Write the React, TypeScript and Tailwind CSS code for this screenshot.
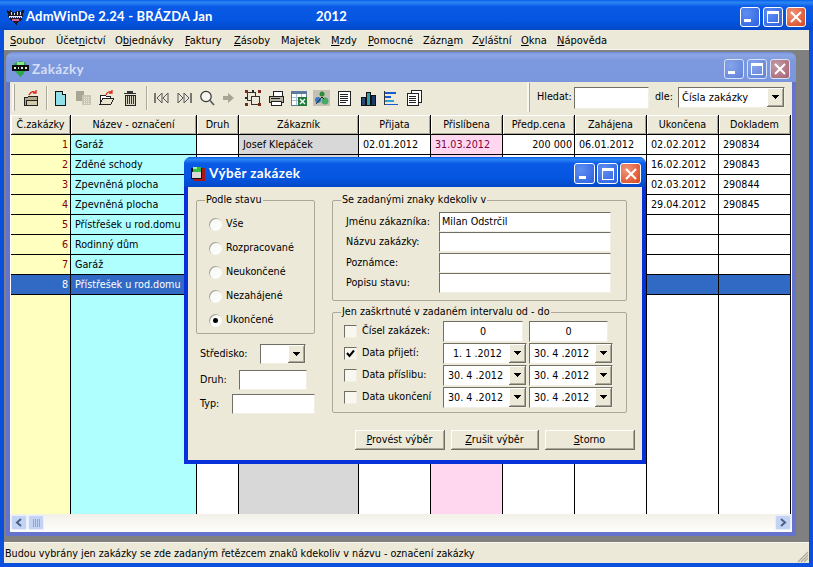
import React from "react";

const sunken = "border border-t-[#716f64] border-l-[#716f64] border-r-[#f1efe2] border-b-[#f1efe2] bg-white";
const raised = "bg-[#ece9d8] shadow-[inset_1px_1px_0_#fff,inset_-1px_-1px_0_#aca899]";
const titleFont = "[font-family:'Lato',sans-serif] font-bold text-[13.5px] tracking-[0.35px] whitespace-nowrap";
const mainTitleFont = "[font-family:'Lato',sans-serif] font-bold text-[13px] tracking-[0.2px] whitespace-nowrap";

function WinBtn({ kind, size, faded }: { kind: "min" | "max" | "close"; size: "w-[20px] h-[20px]" | "w-[21px] h-[21px]"; faded?: boolean }) {
  const bg =
    kind === "close"
      ? faded
        ? "bg-[radial-gradient(circle_at_30%_30%,#c49aa8,#a8606c)]"
        : "bg-[radial-gradient(circle_at_30%_30%,#f0957a,#d8431c)]"
      : faded
      ? "bg-[radial-gradient(circle_at_30%_30%,#86a4ec,#5f82d8)]"
      : "bg-[radial-gradient(circle_at_30%_30%,#5f8ff2,#2b5fe0)]";
  const border = faded ? "border-[#d8e2f8]" : "border-white";
  return (
    <div className={`${size} ${bg} ${border} border rounded-[3px] flex items-center justify-center shrink-0`}>
      <svg width="16" height="16" viewBox="0 0 16 16" fill="none" shapeRendering="crispEdges">
        {kind === "min" && <rect x="2" y="10" width="7" height="3" fill="#fff" />}
        {kind === "max" && (
          <path d="M2 2h12v12H2z M3 5v8h10V5z" fill="#fff" fillRule="evenodd" />
        )}
        {kind === "close" && (
          <path d="M3 3l10 10M13 3L3 13" stroke="#fff" strokeWidth="2" shapeRendering="auto" />
        )}
      </svg>
    </div>
  );
}

function Caret() {
  return (
    <svg width="7" height="4" viewBox="0 0 7 4" shapeRendering="crispEdges">
      <path d="M0 0h7v1H6v1H5v1H4v1H3V3H2V2H1V1H0z" fill="#000" />
    </svg>
  );
}

function DropBtn() {
  return (
    <div className={`${raised} w-[17px] self-stretch flex items-center justify-center shrink-0 border-r border-b border-[#716f64]`}>
      <Caret />
    </div>
  );
}

const Svg = ({ children }: { children: React.ReactNode }) => (
  <svg width="16" height="16" viewBox="0 0 16 16" fill="none" shapeRendering="crispEdges" className="shrink-0">
    {children}
  </svg>
);

const IFolderArrow = () => (
  <Svg>
    <path d="M1 7h4l1-1h8v9H1z" fill="#b4a98a" stroke="#222" />
    <path d="M3 15l1-5h11l-1 5z" fill="#d4c9a8" stroke="#222" />
    <path d="M6 5c2-4 5-4 7-2M13 0v3h-3" stroke="#e03020" strokeWidth="1.4" shapeRendering="auto" />
  </Svg>
);
const IPage = () => (
  <Svg>
    <path d="M3 1h7l3 3v11H3z" fill="#8fe0e8" stroke="#111" />
    <path d="M10 1v3h3" stroke="#111" fill="#fff" />
  </Svg>
);
const ICopy = () => (
  <Svg>
    <path d="M0 1h8v10H0z" fill="#a9a594" />
    <path d="M6 5h9v10H6z" fill="#c8c5b4" />
    <path d="M8 7h5M8 9h5M8 11h5M8 13h5" stroke="#ece9d8" strokeDasharray="1 1" />
  </Svg>
);
const IOpen = () => (
  <Svg>
    <path d="M1 5h5l1 1h4v8H1z" fill="#fff" stroke="#222" />
    <path d="M1 14l3-6h11l-3 6z" fill="#e8e4cf" stroke="#222" />
    <path d="M7 5c1-3 4-4 6-3M13 0v3h-3" stroke="#e03020" strokeWidth="1.3" shapeRendering="auto" />
  </Svg>
);
const ITrash = () => (
  <Svg>
    <path d="M5 1h6v2H5zM2 3h12v1H2z" fill="#333" />
    <path d="M3 5h10v10H3z" fill="#d8d5c4" stroke="#222" />
    <path d="M5 6v8M7 6v8M9 6v8M11 6v8" stroke="#333" />
  </Svg>
);
const IFirst = () => (
  <Svg>
    <path d="M1 3h2v10H1z" fill="#777" />
    <path d="M9 3v10L4 8z" fill="#ece9d8" stroke="#555" shapeRendering="auto" />
    <path d="M15 3v10l-5-5z" fill="#ece9d8" stroke="#555" shapeRendering="auto" />
  </Svg>
);
const ILast = () => (
  <Svg>
    <path d="M13 3h2v10h-2z" fill="#777" />
    <path d="M7 3v10l5-5z" fill="#ece9d8" stroke="#555" shapeRendering="auto" />
    <path d="M1 3v10l5-5z" fill="#ece9d8" stroke="#555" shapeRendering="auto" />
  </Svg>
);
const IMag = () => (
  <Svg>
    <circle cx="7" cy="6.5" r="5.2" stroke="#333" strokeWidth="1.2" fill="#f6f5ee" shapeRendering="auto" />
    <path d="M11 10.5l4 4.5" stroke="#555" strokeWidth="1.6" shapeRendering="auto" />
  </Svg>
);
const IArrow = () => (
  <Svg>
    <path d="M3 6h5V3l6 5-6 5v-3H3z" fill="#a8a594" shapeRendering="auto" />
  </Svg>
);
const ISelect = () => (
  <Svg>
    <path d="M2 2h8v8H2z" stroke="#333" />
    <path d="M6 6h8v8H6z" stroke="#333" fill="#ece9d8" />
    <path d="M0 0h3v3H0zM13 0h3v3h-3zM0 13h3v3H0zM13 13h3v3h-3z" fill="#7a2a14" />
    <path d="M7 0h2v2H7zM0 7h2v2H0z" fill="#222" />
  </Svg>
);
const IPrint = () => (
  <Svg>
    <path d="M5 1h9v5H5z" fill="#fff" stroke="#222" />
    <path d="M1 6h14v6H1z" fill="#b8b5a4" stroke="#222" />
    <path d="M3 11h10v4H3z" fill="#fff" stroke="#222" />
    <path d="M3 8h9" stroke="#222" />
  </Svg>
);
const IExcel = () => (
  <Svg>
    <path d="M0 1h15v14H0z" fill="#fff" stroke="#5c7a9e" />
    <path d="M0 1h15v3H0z" fill="#5c7a9e" />
    <path d="M1 7h13M1 10h13M5 4v11M10 4v11" stroke="#a8c0d8" />
    <path d="M7 7h9v9H7z" fill="#1f7a3a" />
    <path d="M9 9l5 5M14 9l-5 5" stroke="#fff" strokeWidth="1.4" shapeRendering="auto" />
  </Svg>
);
const IImage = () => (
  <div className="w-[17px] h-[16px] bg-[#c4c1b2] flex items-center justify-center">
    <Svg>
      <circle cx="8" cy="4" r="2.5" fill="#2e8b3a" shapeRendering="auto" />
      <circle cx="4" cy="10" r="3" fill="#3a78c8" shapeRendering="auto" />
      <circle cx="11" cy="11" r="3.5" fill="#48a868" shapeRendering="auto" />
      <path d="M2 14l6-7 2 2" stroke="#222" shapeRendering="auto" />
    </Svg>
  </div>
);
const ILines = () => (
  <Svg>
    <path d="M2 1h12v14H2z" fill="#fff" stroke="#222" />
    <path d="M4 4h8M4 6h8M4 8h8M4 10h8M4 12h6" stroke="#222" />
  </Svg>
);
const IBars = () => (
  <Svg>
    <path d="M1 7h4v8H1z" fill="#2a4a7a" stroke="#111" />
    <path d="M6 2h4v13H6z" fill="#2ea0a8" stroke="#111" />
    <path d="M11 5h4v10h-4z" fill="#1e3a6a" stroke="#111" />
  </Svg>
);
const IAlign = () => (
  <Svg>
    <path d="M1 1v14" stroke="#333" />
    <path d="M2 2h11v2H2z" fill="#1a5ad0" />
    <path d="M2 6h6v2H2z" fill="#1a5ad0" />
    <path d="M2 10h9v2H2z" fill="#2ea0c8" />
    <path d="M2 14h13v1H2z" fill="#1a5ad0" />
  </Svg>
);
const IDocs = () => (
  <Svg>
    <path d="M5 0h10v12H5z" fill="#fff" stroke="#222" />
    <path d="M1 3h11v12H1z" fill="#fff" stroke="#222" />
    <path d="M3 6h7M3 8h7M3 10h7M3 12h7" stroke="#222" />
  </Svg>
);

const AppIcon = () => (
  <svg width="17" height="17" viewBox="0 0 17 17" className="shrink-0" shapeRendering="crispEdges">
    <path d="M0 1l2 2 1-2 2 2 1-1 1 2 2-2 1 1 2-2 1 2 2-2 2 0-1 6-1 3-2 2-2 1-1 3-2-1-1-2-3-1-2-3-1-3z" fill="#1a1a24" />
    <path d="M4 3h1v3H4zM7 4h1v2H7zM10 3h1v3h-1zM13 3h1v3h-1z" fill="#d8d8e8" />
    <path d="M2 7h13v2H2z" fill="#e8e8f4" />
    <path d="M3 8h1v1H3zM5 8h1v1H5zM7 8h1v1H7zM9 8h1v1H9zM11 8h1v1h-1zM13 8h1v1h-1z" fill="#203080" />
    <path d="M5 10h7v2H5z" fill="#d8609a" />
  </svg>
);
const ChildIcon = () => (
  <svg width="17" height="16" viewBox="0 0 17 16" className="shrink-0" shapeRendering="crispEdges">
    <path d="M8 0l6 2v5l-2 5-4 4-4-4-2-5V2z" fill="#2ea84a" />
    <path d="M5 1h7v3H5z" fill="#8fe08f" />
    <path d="M0 4h17v6H0z" fill="#111" />
    <path d="M2 6h2v2H2zM6 6h1v2H6zM9 6h2v2H9zM13 6h2v2h-2z" fill="#d8f0d8" />
  </svg>
);
const DlgIcon = () => (
  <svg width="16" height="16" viewBox="0 0 16 16" className="shrink-0" shapeRendering="crispEdges">
    <path d="M3 2h12v13H3z" fill="#a81818" />
    <path d="M1 2h11v11H1z" fill="#111" />
    <path d="M2 6h9v6H2z" fill="#d8d8d8" />
    <path d="M3 1h8v5H3z" fill="#30c040" />
    <path d="M3 1h4v2H3z" fill="#a8f0a8" />
  </svg>
);

const menu: [string, string, string, string][] = [
  ["", "S", "oubor", "w-[46px]"],
  ["Účet", "n", "ictví", "w-[59px]"],
  ["O", "b", "jednávky", "w-[70px]"],
  ["", "F", "aktury", "w-[49px]"],
  ["", "Z", "ásoby", "w-[47px]"],
  ["Ma", "j", "etek", "w-[50px]"],
  ["", "M", "zdy", "w-[37px]"],
  ["", "P", "omocné", "w-[55px]"],
  ["Zázn", "a", "m", "w-[49px]"],
  ["Z", "v", "láštní", "w-[49px]"],
  ["", "O", "kna", "w-[36px]"],
  ["", "N", "ápověda", "w-[60px]"],
];

const headers = ["Č.zakázky", "Název - označení", "Druh", "Zákazník", "Přijata", "Přislíbena", "Předp.cena", "Zahájena", "Ukončena", "Dokladem"];
const cols = "grid grid-cols-[60px_126px_42px_120px_72px_72px_72px_72px_72px_72px]";
const colBg = ["bg-[#ffffc0]", "bg-[#b0ffff]", "bg-white", "bg-[#d8d8d8]", "bg-white", "bg-[#ffd8f0]", "bg-white", "bg-white", "bg-white", "bg-white"];

const rows: { name: string; end: string; doc: string; cells?: Record<number, string> }[] = [
  { name: "Garáž", end: "02.02.2012", doc: "290834", cells: { 3: "Josef Klepáček", 4: "02.01.2012", 5: "31.03.2012", 6: "200 000", 7: "06.01.2012" } },
  { name: "Zděné schody", end: "16.02.2012", doc: "290843" },
  { name: "Zpevněná plocha", end: "02.03.2012", doc: "290844" },
  { name: "Zpevněná plocha", end: "29.04.2012", doc: "290845" },
  { name: "Přístřešek u rod.domu", end: "", doc: "" },
  { name: "Rodinný dům", end: "", doc: "" },
  { name: "Garáž", end: "", doc: "" },
  { name: "Přístřešek u rod.domu", end: "", doc: "" },
];

function Row({ r, i }: { r: (typeof rows)[number]; i: number }) {
  const sel = i === 7;
  const values = [String(i + 1), r.name, "", "", "", "", "", "", r.end, r.doc].map((v, c) => r.cells?.[c] ?? v);
  return (
    <div className={cols}>
      {values.map((v, c) => (
        <div
          key={c}
          className={`h-[20px] leading-[19px] border-r border-b border-black pl-[4px] pr-[2px] whitespace-nowrap overflow-hidden ${
            sel ? "bg-[#316ac5] text-white" : colBg[c]
          } ${c === 0 || c === 6 ? "text-right" : ""} ${c === 0 && !sel ? "text-[#800000]" : ""} ${c === 5 ? "text-[#800040]" : ""}`}
        >
          {v}
        </div>
      ))}
    </div>
  );
}

function Radio({ label, on }: { label: string; on?: boolean }) {
  return (
    <div className="h-[24px] flex items-center pl-[12px]">
      <div className="w-[13px] h-[13px] rounded-full bg-[#fbfbf8] shadow-[inset_1px_1px_0_#a8a698] flex items-center justify-center shrink-0">
        {on && <div className="w-[5px] h-[5px] rounded-full bg-black" />}
      </div>
      <span className="ml-[4px]">{label}</span>
    </div>
  );
}

function Field({ label, value, cls }: { label: string; value?: string; cls?: string }) {
  return (
    <div className={`flex items-center h-[20px] ${cls ?? ""}`}>
      <span className="w-[106px] shrink-0 pl-[13px] whitespace-nowrap">{label}</span>
      <div className={`${sunken} w-[172px] h-[20px] leading-[17px] pl-[2px]`}>{value}</div>
    </div>
  );
}

function Check({ on }: { on?: boolean }) {
  return (
    <div className="w-[13px] h-[13px] shrink-0 bg-[#f8f7f0] border border-t-[#716f64] border-l-[#716f64] border-r-[#f1efe2] border-b-[#f1efe2] flex items-center justify-center">
      {on && (
        <svg width="9" height="9" viewBox="0 0 9 9">
          <path d="M1 4l2.5 3L8 1.5" stroke="#000" strokeWidth="2" fill="none" />
        </svg>
      )}
    </div>
  );
}

function DateBox({ v, first }: { v: string; first?: boolean }) {
  return (
    <div className={`${sunken} w-[84px] h-[21px] flex items-stretch`}>
      <span className={`flex-1 leading-[19px] whitespace-nowrap ${first ? "pl-[9px]" : "pl-[4px]"}`}>{v}</span>
      <DropBtn />
    </div>
  );
}

function DateRow({ label, a, b, on, first }: { label: string; a: string; b: string; on?: boolean; first?: boolean }) {
  return (
    <div className="h-[22px] flex items-center pl-[11px]">
      <Check on={on} />
      <span className="ml-[5px] w-[81px] shrink-0 whitespace-nowrap">{label}</span>
      <DateBox v={a} first={first} />
      <div className="w-[2px]" />
      <DateBox v={b} />
    </div>
  );
}

function Btn({ pre, u, post, w }: { pre?: string; u: string; post: string; w: string }) {
  return (
    <div className={`${w} h-[20px] leading-[19px] text-center border-r border-b border-[#716f64] ${raised}`}>
      {pre}
      <u>{u}</u>
      {post}
    </div>
  );
}

const legend = "ml-[8px] px-[1px] h-[14px] leading-[13px]";
const fs = "border border-[#aca899] rounded-[2px]";

export default function App() {
  return (
    <div className="relative w-[813px] h-[567px] overflow-hidden flex flex-col bg-[#0a50dc] text-black text-[10.7px] [font-family:'DejaVu_Sans_Condensed','Liberation_Sans',sans-serif]">
      {/* Main title */}
      <div className="h-[30px] shrink-0 flex items-center pl-[7px] pr-[7px] pt-[4px] bg-[linear-gradient(180deg,#0a5fe8_0%,#2a86f4_8%,#0a5ae6_22%,#0455e0_70%,#0348c8_100%)]">
        <AppIcon />
        <span className={`ml-[2px] w-[290px] shrink-0 text-white ${mainTitleFont}`}>AdmWinDe 2.24 - BRÁZDA Jan</span>
        <span className={`text-white ${mainTitleFont}`}>2012</span>
        <div className="ml-auto flex gap-[3px]">
          <WinBtn kind="min" size="w-[20px] h-[20px]" />
          <WinBtn kind="max" size="w-[20px] h-[20px]" />
          <WinBtn kind="close" size="w-[20px] h-[20px]" />
        </div>
      </div>

      {/* Body with blue frame */}
      <div className="flex-1 mx-[4px] mb-[4px] flex flex-col min-h-0 bg-[#ece9d8]">
        <div className="h-[20px] shrink-0 flex items-center pl-[6px] pt-[3px] text-[11px] border-b border-[#f8f7f0]">
          {menu.map(([a, b, c, w]) => (
            <span key={b + c} className={`${w} shrink-0 whitespace-nowrap`}>
              {a}
              <u>{b}</u>
              {c}
            </span>
          ))}
        </div>

        {/* MDI area */}
        <div className="flex-1 min-h-0 bg-[#808080] pl-[2px] pt-[2px] pb-[6px] flex">
          <div className="w-[790px] flex flex-col">
            <div className="h-[30px] shrink-0 pt-[4px] rounded-t-[7px] flex items-center pl-[6px] pr-[6px] bg-[linear-gradient(180deg,#6e8fd8_0%,#8ca6e4_10%,#7c98de_30%,#7a96dc_100%)]">
              <ChildIcon />
              <span className={`ml-[3px] text-[#d4def4] ${titleFont}`}>Zakázky</span>
              <div className="ml-auto flex gap-[3px]">
                <WinBtn kind="min" size="w-[20px] h-[20px]" faded />
                <WinBtn kind="max" size="w-[20px] h-[20px]" faded />
                <WinBtn kind="close" size="w-[20px] h-[20px]" faded />
              </div>
            </div>
            <div className="flex-1 min-h-0 border-x-4 border-b-4 border-[#6673cc] flex flex-col bg-[#ece9d8]">
              {/* Toolbar */}
              <div className="h-[33px] shrink-0 flex items-center pb-[2px]">
                <div className="ml-[2px] w-[3px] h-[27px] bg-[#f8f7f0] border-r border-[#aca899]" />
                <div className="ml-[8px]"><IFolderArrow /></div>
                <div className="ml-[7px] w-[2px] h-[24px] bg-[#f8f7f0] border-l border-[#aca899]" />
                <div className="ml-[4px]"><IPage /></div>
                <div className="ml-[8px]"><ICopy /></div>
                <div className="ml-[7px]"><IOpen /></div>
                <div className="ml-[7px]"><ITrash /></div>
                <div className="ml-[8px] w-[2px] h-[24px] bg-[#f8f7f0] border-l border-[#aca899]" />
                <div className="ml-[5px]"><IFirst /></div>
                <div className="ml-[8px]"><ILast /></div>
                <div className="ml-[6px]"><IMag /></div>
                <div className="ml-[5px]"><IArrow /></div>
                <div className="ml-[9px]"><ISelect /></div>
                <div className="ml-[7px]"><IPrint /></div>
                <div className="ml-[7px]"><IExcel /></div>
                <div className="ml-[6px]"><IImage /></div>
                <div className="ml-[6px]"><ILines /></div>
                <div className="ml-[8px]"><IBars /></div>
                <div className="ml-[7px]"><IAlign /></div>
                <div className="ml-[7px]"><IDocs /></div>
                <div className="ml-[105px] w-[3px] h-[29px] bg-[#f8f7f0] border-r border-[#aca899]" />
                <span className="ml-[7px] w-[36px] shrink-0">Hledat:</span>
                <div className={`${sunken} ml-[1px] w-[75px] h-[22px]`} />
                <span className="ml-[6px] w-[22px] shrink-0">dle:</span>
                <div className={`${sunken} ml-[1px] w-[107px] h-[21px] flex items-stretch`}>
                  <span className="flex-1 pl-[3px] leading-[19px] text-[11px]">Čísla zakázky</span>
                  <DropBtn />
                </div>
              </div>

              {/* Grid */}
              <div className="flex-1 min-h-0 flex flex-col pl-[1px] bg-white">
                <div className={cols}>
                  {headers.map((h) => (
                    <div key={h} className={`h-[20px] leading-[19px] text-center border-r border-b border-black whitespace-nowrap overflow-hidden ${raised}`}>
                      {h}
                    </div>
                  ))}
                </div>
                {rows.map((r, i) => (
                  <Row key={i} r={r} i={i} />
                ))}
                <div className={`${cols} flex-1 min-h-0`}>
                  {colBg.map((c, i) => (
                    <div key={i} className={`${c} border-r border-black`} />
                  ))}
                </div>
                {/* Scrollbar */}
                <div className="h-[18px] shrink-0 -ml-[1px] pl-[1px] pr-[1px] pb-[1px] flex items-stretch bg-[linear-gradient(180deg,#f2f0e8,#fdfdfb)] border-b border-white">
                  <div className="w-[16px] mt-[1px] bg-[#c3d3f4] border border-[#e8eefc] rounded-[2px] flex items-center justify-center">
                    <svg width="8" height="9" viewBox="0 0 8 9"><path d="M6 1L2 4.5 6 8" stroke="#4d6185" strokeWidth="2" fill="none" /></svg>
                  </div>
                  <div className="w-[16px] mt-[1px] ml-[1px] bg-[#c3d3f4] border border-[#e8eefc] rounded-[2px] flex items-center justify-center">
                    <svg width="8" height="8" viewBox="0 0 8 8" shapeRendering="crispEdges"><path d="M1 0v8M3 0v8M5 0v8M7 0v8" stroke="#8fa4d4" /></svg>
                  </div>
                  <div className="flex-1" />
                  <div className="w-[16px] mt-[1px] bg-[#c3d3f4] border border-[#e8eefc] rounded-[2px] flex items-center justify-center">
                    <svg width="8" height="9" viewBox="0 0 8 9"><path d="M2 1l4 3.5L2 8" stroke="#4d6185" strokeWidth="2" fill="none" /></svg>
                  </div>
                </div>
              </div>
            </div>
          </div>
        </div>

        {/* Status */}
        <div className="h-[21px] shrink-0 relative flex items-center pl-[1px] pt-[2px] border-t border-[#f8f7f0]">
          <span>Budou vybrány jen zakázky se zde zadaným řetězcem znaků kdekoliv v názvu - označení zakázky</span>
          <svg className="absolute right-[0px] bottom-[0px]" width="13" height="13" viewBox="0 0 13 13">
            <path d="M12 2L2 12M12 5L5 12M12 8L8 12" stroke="#aca899" strokeWidth="1.2" />
          </svg>
        </div>
      </div>

      {/* Dialog */}
      <div className="absolute left-[184px] top-[157px] w-[462px] h-[307px] flex flex-col rounded-t-[7px] bg-[#0831d9]">
        <div className="h-[30px] shrink-0 pt-[3px] rounded-t-[7px] flex items-center pl-[6px] pr-[5px] bg-[linear-gradient(180deg,#0a5fe8_0%,#2a86f4_8%,#0a5ae6_22%,#0455e0_70%,#0348c8_100%)]">
          <DlgIcon />
          <span className={`ml-[3px] text-white ${titleFont}`}>Výběr zakázek</span>
          <div className="ml-auto flex gap-[2px]">
            <WinBtn kind="min" size="w-[21px] h-[21px]" />
            <WinBtn kind="max" size="w-[21px] h-[21px]" />
            <WinBtn kind="close" size="w-[21px] h-[21px]" />
          </div>
        </div>
        <div className="flex-1 mx-[4px] mb-[4px] bg-[#ece9d8] flex pl-[8px] pt-[6px]">
          <div className="w-[119px] shrink-0 flex flex-col">
            <fieldset className={`${fs} h-[141px]`}>
              <legend className={legend}>Podle stavu</legend>
              <div className="pt-[5px]">
                <Radio label="Vše" />
                <Radio label="Rozpracované" />
                <Radio label="Neukončené" />
                <Radio label="Nezahájené" />
                <Radio label="Ukončené" on />
              </div>
            </fieldset>
            <div className="mt-[10px] flex items-center h-[20px]">
              <span className="pl-[4px] w-[64px] shrink-0">Středisko:</span>
              <div className={`${sunken} w-[46px] h-[20px] flex items-stretch`}>
                <span className="flex-1" />
                <DropBtn />
              </div>
            </div>
            <div className="mt-[6px] flex items-center h-[20px]">
              <span className="pl-[4px] w-[43px] shrink-0">Druh:</span>
              <div className={`${sunken} w-[68px] h-[20px]`} />
            </div>
            <div className="mt-[4px] flex items-center h-[20px]">
              <span className="pl-[4px] w-[36px] shrink-0">Typ:</span>
              <div className={`${sunken} w-[83px] h-[20px]`} />
            </div>
          </div>
          <div className="ml-[17px] w-[303px] shrink-0 flex flex-col">
            <fieldset className={`${fs} w-[295px] h-[108px]`}>
              <legend className={legend}>Se zadanými znaky kdekoliv v</legend>
              <div className="pt-[5px]">
                <Field label="Jménu zákazníka:" value="Milan Odstrčil" />
                <Field label="Názvu zakázky:" />
                <Field label="Poznámce:" cls="mt-[1px]" />
                <Field label="Popisu stavu:" />
              </div>
            </fieldset>
            <fieldset className={`${fs} w-[295px] h-[108px] mt-[4px]`}>
              <legend className={legend}>Jen zaškrtnuté v zadaném intervalu od - do</legend>
              <div className="pt-[1px]">
                <div className="h-[22px] flex items-center pl-[11px]">
                  <Check />
                  <span className="ml-[5px] w-[81px] shrink-0 whitespace-nowrap">Čísel zakázek:</span>
                  <div className={`${sunken} w-[80px] h-[21px] leading-[19px] text-center`}>0</div>
                  <div className={`${sunken} ml-[6px] w-[79px] h-[21px] leading-[19px] text-center`}>0</div>
                </div>
                <DateRow label="Data přijetí:" a="1. 1 .2012" b="30. 4 .2012" on first />
                <DateRow label="Data příslibu:" a="30. 4 .2012" b="30. 4 .2012" />
                <DateRow label="Data ukončení" a="30. 4 .2012" b="30. 4 .2012" />
              </div>
            </fieldset>
            <div className="mt-[17px] ml-[23px] flex gap-[6px]">
              <Btn u="P" post="rovést výběr" w="w-[90px]" />
              <Btn u="Z" post="rušit výběr" w="w-[88px]" />
              <Btn u="S" post="torno" w="w-[90px]" />
            </div>
          </div>
        </div>
      </div>
    </div>
  );
}
